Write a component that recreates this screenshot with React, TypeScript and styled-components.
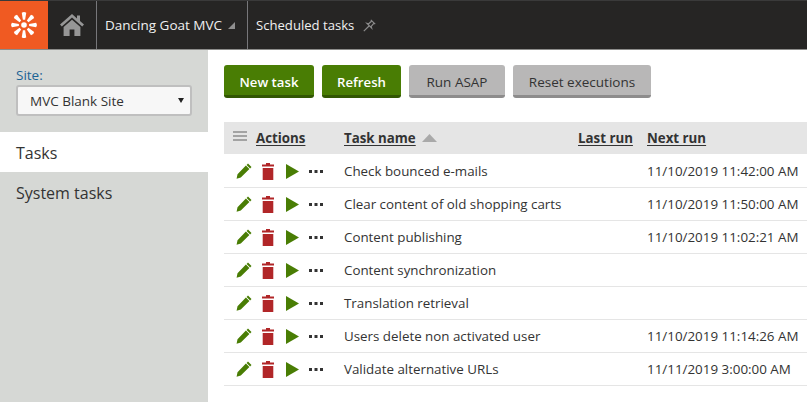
import React from 'react'
import styled, { createGlobalStyle } from 'styled-components'

const GlobalStyle = createGlobalStyle`
    html, body {
        margin: 0;
        padding: 0;
        background: #fff;
    }
    body {
        font-family: "Open Sans", "Noto Sans", sans-serif;
        overflow: hidden;
    }
`

const Page = styled.div`
    width: 807px;
    height: 402px;
    display: flex;
    flex-direction: column;
    overflow: hidden;
`
const TopBar = styled.header`
    height: 48px;
    flex: none;
    display: flex;
    background-color: #262524;
    border-top: 1px solid #3a3a3a;
    border-bottom: 1px solid #8c8c8a;
`
const Logo = styled.div`
    width: 48px;
    background-color: #f05a22;
    display: flex;
    align-items: center;
    justify-content: center;
`
const HomeLink = styled.div`
    width: 48px;
    border-right: 1px solid #77777a;
    display: flex;
    align-items: center;
    justify-content: center;
`
const Crumb = styled.div`
    display: flex;
    align-items: center;
    gap: 6px;
    padding: 0 12px 0 8px;
    color: #f0f0f0;
    font-size: 13.5px;
    border-right: 1px solid #77777a;
`
const PageCrumb = styled(Crumb)`
    gap: 9px;
    font-size: 13.1px;
    border-right: 0;
`
const Body = styled.div`
    flex: 1;
    display: flex;
    min-height: 0;
`
const Sidebar = styled.aside`
    width: 208px;
    flex: none;
    background-color: #d6d8d5;
`
const SiteBlock = styled.div`
    height: 82px;
    box-sizing: border-box;
    padding: 18px 16px 0;
`
const SiteLabel = styled.div`
    color: #1c6394;
    font-size: 13.5px;
    line-height: 15px;
`
const SiteSelect = styled.div`
    margin-top: 2px;
    height: 31px;
    width: 176px;
    box-sizing: border-box;
    background: #f7f7f7;
    border: 2px solid #bfbfbf;
    border-radius: 3px;
    padding: 0 6px 0 12px;
    display: flex;
    align-items: center;
    justify-content: space-between;
    font-size: 13.5px;
    color: #333;
`
const SelectArrow = styled.span`
    width: 0;
    height: 0;
    border-left: 3px solid transparent;
    border-right: 3px solid transparent;
    border-top: 5px solid #222;
`
const NavItem = styled.div<{ $active?: boolean }>`
    height: 40px;
    box-sizing: border-box;
    padding: 2px 0 0 16px;
    display: flex;
    align-items: center;
    font-size: 16px;
    color: #333;
    background-color: ${p => (p.$active ? '#fff' : 'transparent')};
`
const Main = styled.main`
    flex: 1;
    padding: 15px 0 0 16px;
    min-width: 0;
`
const Toolbar = styled.div`
    display: flex;
    gap: 8px;
    margin-bottom: 24px;
`
const Button = styled.button<{ $primary?: boolean; $width: number }>`
    height: 33px;
    width: ${p => p.$width}px;
    padding: 4px 0 0;
    border: 0;
    border-radius: 3px;
    font-family: inherit;
    font-size: ${p => (p.$primary ? '13.2px' : '13.5px')};
    font-weight: ${p => (p.$primary ? 600 : 500)};
    color: ${p => (p.$primary ? '#fff' : '#333')};
    background-color: ${p => (p.$primary ? '#497d04' : '#b8b7b7')};
    border-bottom: 3px solid ${p => (p.$primary ? '#325703' : '#8d8c8c')};
`
const Table = styled.div`
    display: grid;
    grid-template-columns: 120px 234px 69px 1fr;
`
const HeadCell = styled.div`
    height: 32px;
    display: flex;
    align-items: center;
    gap: 6px;
    background-color: #e5e5e5;
    border-bottom: 1px solid #fff;
    font-size: 13.3px;
    font-weight: 700;
    color: #333;
    u {
        text-underline-offset: 2px;
    }
`
const ActionsHead = styled(HeadCell)`
    padding-left: 9px;
    gap: 9px;
`
const Cell = styled.div`
    height: 32px;
    display: flex;
    align-items: center;
    border-bottom: 1px solid #e5e5e5;
    font-size: 13.35px;
    color: #333;
    white-space: nowrap;
`
const ActionsCell = styled(Cell)`
    padding-left: 12px;
    gap: 10px;
`
const DateCell = styled(Cell)`
    font-size: 13.4px;
`
const MenuGlyph = styled.svg`
    margin-top: -4px;
`
const RunGlyph = styled.svg`
    margin-left: 2px;
`

const KenticoLogo = () => (
    <svg width="28" height="28" viewBox="-15 -15 30 30">
        <circle r="3" fill="#fff" />
        {[0, 45, 90, 135, 180, 225, 270, 315].map(a => (
            <path key={a} d="M-2.4 -13 Q0 -14.8 2.4 -13 L1.2 -5.5 L-1.2 -5.5 Z" fill="#fff" transform={`rotate(${a})`} />
        ))}
    </svg>
)

const HomeIcon = () => (
    <svg width="24" height="22" viewBox="0 0 24 22">
        <path d="M12 0 L0 10.5 L1.8 12.5 L12 3.6 L22.2 12.5 L24 10.5 L20 7 V1.5 H17 V4.4 Z" fill="#969696" />
        <path d="M12 5.8 L3.6 13 V22 H9.6 V15.5 H14.4 V22 H20.4 V13 Z" fill="#969696" />
    </svg>
)

const CornerArrow = () => (
    <svg width="7" height="7" viewBox="0 0 7 7">
        <path d="M7 0 V7 H0 Z" fill="#8f8f8f" />
    </svg>
)

const PinIcon = () => (
    <svg width="13" height="13" viewBox="0 0 13 13" fill="none" stroke="#8b8b8b" strokeWidth="1.2">
        <path d="M7.8 0.8 L12.2 5.2 M8.8 2 L5.6 4.8 L4 4.4 L8.6 9 L8.2 7.4 L11 4.2 M6 7 L0.8 12.2" />
    </svg>
)

const EditIcon = () => (
    <svg width="16" height="16" viewBox="0 0 16 16">
        <path d="M12 0.5 L15.5 4 L14.1 5.4 L10.6 1.9 Z M9.9 2.6 L13.4 6.1 L4.8 14.6 L0.6 15.8 L1.5 11.2 Z" fill="#497d04" />
    </svg>
)

const DeleteIcon = () => (
    <svg width="12" height="17" viewBox="0 0 12 17">
        <path d="M4 0 H8 V1.5 H12 V3.6 H0 V1.5 H4 Z M0.7 5 H11.3 V17 H0.7 Z" fill="#b12628" />
    </svg>
)

const RunIcon = () => (
    <RunGlyph width="13" height="15" viewBox="0 0 13 15">
        <path d="M0 0 L13 7.5 L0 15 Z" fill="#497d04" />
    </RunGlyph>
)

const MoreIcon = () => (
    <svg width="14" height="3" viewBox="0 0 14 3">
        <rect x="0" y="0" width="3" height="3" fill="#333" />
        <rect x="5.5" y="0" width="3" height="3" fill="#333" />
        <rect x="11" y="0" width="3" height="3" fill="#333" />
    </svg>
)

const MenuIcon = () => (
    <MenuGlyph width="14" height="10" viewBox="0 0 14 10">
        <rect y="0" width="14" height="2" fill="#a3a3a3" />
        <rect y="4" width="14" height="2" fill="#a3a3a3" />
        <rect y="8" width="14" height="2" fill="#a3a3a3" />
    </MenuGlyph>
)

const SortIcon = () => (
    <svg width="15" height="8" viewBox="0 0 15 8">
        <path d="M7.5 0 L15 8 H0 Z" fill="#a9a9a9" />
    </svg>
)

const tasks = [
    { name: 'Check bounced e-mails', next: '11/10/2019 11:42:00 AM' },
    { name: 'Clear content of old shopping carts', next: '11/10/2019 11:50:00 AM' },
    { name: 'Content publishing', next: '11/10/2019 11:02:21 AM' },
    { name: 'Content synchronization', next: '' },
    { name: 'Translation retrieval', next: '' },
    { name: 'Users delete non activated user', next: '11/10/2019 11:14:26 AM' },
    { name: 'Validate alternative URLs', next: '11/11/2019 3:00:00 AM' },
]

const App = () => (
    <Page>
        <GlobalStyle />
        <TopBar>
            <Logo><KenticoLogo /></Logo>
            <HomeLink><HomeIcon /></HomeLink>
            <Crumb>{'Dancing Goat MVC'}<CornerArrow /></Crumb>
            <PageCrumb>{'Scheduled tasks'}<PinIcon /></PageCrumb>
        </TopBar>
        <Body>
            <Sidebar>
                <SiteBlock>
                    <SiteLabel>{'Site:'}</SiteLabel>
                    <SiteSelect>{'MVC Blank Site'}<SelectArrow /></SiteSelect>
                </SiteBlock>
                <NavItem $active>{'Tasks'}</NavItem>
                <NavItem>{'System tasks'}</NavItem>
            </Sidebar>
            <Main>
                <Toolbar>
                    <Button $primary $width={90}>{'New task'}</Button>
                    <Button $primary $width={79}>{'Refresh'}</Button>
                    <Button $width={96}>{'Run ASAP'}</Button>
                    <Button $width={138}>{'Reset executions'}</Button>
                </Toolbar>
                <Table>
                    <ActionsHead><MenuIcon /><u>{'Actions'}</u></ActionsHead>
                    <HeadCell><u>{'Task name'}</u><SortIcon /></HeadCell>
                    <HeadCell><u>{'Last run'}</u></HeadCell>
                    <HeadCell><u>{'Next run'}</u></HeadCell>
                    {
                        tasks.map(t => (
                            <React.Fragment key={t.name}>
                                <ActionsCell><EditIcon /><DeleteIcon /><RunIcon /><MoreIcon /></ActionsCell>
                                <Cell>{t.name}</Cell>
                                <Cell />
                                <DateCell>{t.next}</DateCell>
                            </React.Fragment>
                        ))
                    }
                </Table>
            </Main>
        </Body>
    </Page>
)

export default App
